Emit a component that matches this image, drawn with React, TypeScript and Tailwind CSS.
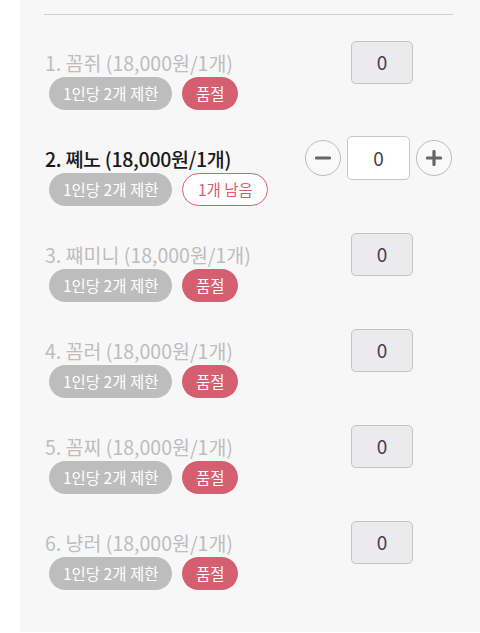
import React from "react";

const font = { fontFamily: '"Noto Sans CJK KR", "Noto Sans", sans-serif' };

type Item = { name: string; active?: boolean };

const items: Item[] = [
  { name: "1. 꼼쥐 (18,000원/1개)" },
  { name: "2. 쪠노 (18,000원/1개)", active: true },
  { name: "3. 쨰미니 (18,000원/1개)" },
  { name: "4. 꼼러 (18,000원/1개)" },
  { name: "5. 꼼찌 (18,000원/1개)" },
  { name: "6. 냥러 (18,000원/1개)" },
];

function Row({ item }: { item: Item }) {
  return (
    <div className="flex h-[96px] items-start justify-between">
      <div className="pl-[25px] pt-[9px]">
        <div
          className={
            item.active
              ? "text-[19.5px] leading-[26px] font-medium tracking-[-0.3px] text-[#1a1a1a]"
              : "text-[19.5px] leading-[26px] text-[#bdbdbd]"
          }
        >
          {item.name}
        </div>
        <div className="mt-px ml-[4px] flex gap-[10px]">
          <span className="flex h-[33px] items-center rounded-full bg-[#bdbdbd] px-[14px] text-[15.5px] text-white">
            1인당 2개 제한
          </span>
          {item.active ? (
            <span className="flex h-[33px] items-center rounded-full border border-[#d35f70] bg-white px-[14.5px] text-[15.5px] text-[#d35f70]">
              1개 남음
            </span>
          ) : (
            <span className="flex h-[33px] items-center rounded-full bg-[#d35f70] px-[13.5px] text-[15.5px] text-white">
              품절
            </span>
          )}
        </div>
      </div>
      {item.active ? (
        <div className="-mt-px mr-[28px] flex items-center gap-[6px]">
          <div className="flex h-[36px] w-[36px] items-center justify-center rounded-full border border-[#bbbbbb] bg-[#f9f9f9]">
            <svg width="16" height="16" viewBox="0 0 16 16">
              <path d="M1.5 8h13" stroke="#666" strokeWidth="3.2" strokeLinecap="round" />
            </svg>
          </div>
          <div className="flex h-[44px] w-[63px] items-center justify-center rounded-[5px] border border-[#c8c8c8] bg-white text-[19px] text-[#444]">
            0
          </div>
          <div className="flex h-[36px] w-[36px] items-center justify-center rounded-full border border-[#bbbbbb] bg-[#f9f9f9]">
            <svg width="16" height="16" viewBox="0 0 16 16">
              <path d="M1.5 8h13M8 1.5v13" stroke="#666" strokeWidth="3.2" strokeLinecap="round" />
            </svg>
          </div>
        </div>
      ) : (
        <div className="mr-[67px] flex h-[43px] w-[62px] items-center justify-center rounded-[5px] border border-[#c4c4c4] bg-[#ebebee] text-[19px] text-[#444]">
          0
        </div>
      )}
    </div>
  );
}

export default function App() {
  return (
    <div className="h-[633px] w-[480px] bg-white pl-[20px]" style={font}>
      <div className="h-[632px] bg-[#f7f7f7] pt-[14px]">
        <div className="ml-[24px] mr-[27px] h-px bg-[#cfcfcf]" />
        <div className="mt-[26px]">
          {items.map((it) => (
            <Row key={it.name} item={it} />
          ))}
        </div>
      </div>
    </div>
  );
}
